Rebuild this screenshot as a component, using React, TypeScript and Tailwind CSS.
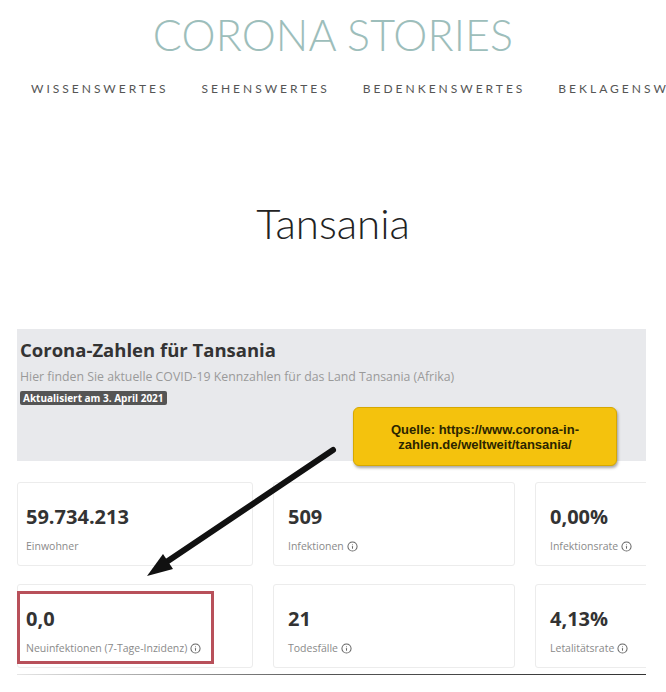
import { Info } from "lucide-react";

type Stat = {
  value: string;
  label: string;
  info?: boolean;
};

const topRow: Stat[] = [
  { value: "59.734.213", label: "Einwohner" },
  { value: "509", label: "Infektionen", info: true },
  { value: "0,00%", label: "Infektionsrate", info: true },
];

const bottomRow: Stat[] = [
  { value: "0,0", label: "Neuinfektionen (7-Tage-Inzidenz)", info: true },
  { value: "21", label: "Todesfälle", info: true },
  { value: "4,13%", label: "Letalitätsrate", info: true },
];

const navItems = ["WISSENSWERTES", "SEHENSWERTES", "BEDENKENSWERTES", "BEKLAGENSWERTES"];

function StatCard({ stat, first, highlight }: { stat: Stat; first?: boolean; highlight?: boolean }) {
  return (
    <div
      className={`relative h-[84px] rounded-[3px] border border-[#ececec] bg-white pt-[22px] ${
        first ? "pl-[8px]" : "pl-[14px]"
      }`}
    >
      {highlight ? (
        <div className="absolute left-[-1px] top-[6px] h-[73px] w-[197px] border-[3px] border-[#b8505a]" />
      ) : null}
      <div className="text-[20px] font-bold leading-[24px] text-[#333]">{stat.value}</div>
      <div className="mt-[11px] flex items-center gap-[3px] text-[10.5px] leading-[13px] text-[#8a8a8a]">
        <span>{stat.label}</span>
        {stat.info ? <Info size={11} strokeWidth={2.2} className="text-[#666]" /> : null}
      </div>
    </div>
  );
}

export default function App() {
  return (
    <div className="h-[692px] w-[666px] overflow-hidden bg-white">
      <header className="pt-[11px] text-center">
        <h1 className="font-['Lato',sans-serif] text-[43px] font-light leading-[48px] tracking-[0.1px] text-[#9dbebb]">
          CORONA STORIES
        </h1>
        <nav className="mt-[21px] flex gap-[33px] overflow-hidden whitespace-nowrap pl-[31px] font-['Lato',sans-serif] text-[12px] tracking-[3px] text-[#555]">
          {navItems.map((item) => (
            <span key={item} className="shrink-0">
              {item}
            </span>
          ))}
        </nav>
      </header>

      <h2 className="mt-[101px] text-center font-['Lato',sans-serif] text-[42px] font-light leading-[48px] text-[#222]">
        Tansania
      </h2>

      <div className="relative ml-[17px] mt-[82px] h-[346px] w-[629px] overflow-hidden bg-white font-['Open_Sans',sans-serif]">
        <section className="h-[132px] bg-[#e8e9ec] pl-[3px] pt-[9px]">
          <h3 className="text-[18.5px] font-bold leading-[24px] text-[#333]">Corona-Zahlen für Tansania</h3>
          <p className="mt-[7px] text-[12.3px] leading-[15px] text-[#9a9a9a]">
            Hier finden Sie aktuelle COVID-19 Kennzahlen für das Land Tansania (Afrika)
          </p>
          <span className="mt-[3px] inline-block rounded-[2px] bg-[#555] px-[3px] text-[10px] font-bold leading-[14px] text-white">
            Aktualisiert am 3. April 2021
          </span>
        </section>

        <div className="mt-[21px] grid grid-cols-[236px_242px_240px] gap-x-[20px] gap-y-[18px]">
          {topRow.map((stat, i) => (
            <StatCard key={stat.value} stat={stat} first={i === 0} />
          ))}
          {bottomRow.map((stat, i) => (
            <StatCard key={stat.value} stat={stat} first={i === 0} highlight={i === 0} />
          ))}
        </div>

        <div className="mt-[6px] h-[2px] bg-gradient-to-r from-[#e6e6e6] via-[#555] to-[#333]" />

        {/* yellow source callout over the screenshot */}
        <div className="absolute left-[336px] top-[78px] flex h-[59px] w-[264px] flex-col items-center justify-center rounded-[6px] border border-[#d6a800] bg-[#f4c20d] font-['Liberation_Sans',Arial,sans-serif] text-[13px] font-bold leading-[15px] text-[#2b2500] shadow-[1px_2px_3px_rgba(0,0,0,0.35)]">
          <span>Quelle: https://www.corona-in-</span>
          <span>zahlen.de/weltweit/tansania/</span>
        </div>

        <svg className="absolute left-0 top-0" width="629" height="346" viewBox="0 0 629 346">
          <line x1="316" y1="121" x2="142" y2="238" stroke="#111" strokeWidth="6" strokeLinecap="round" />
          <polygon points="130,247 146,225 156,240" fill="#111" />
        </svg>
      </div>
    </div>
  );
}
